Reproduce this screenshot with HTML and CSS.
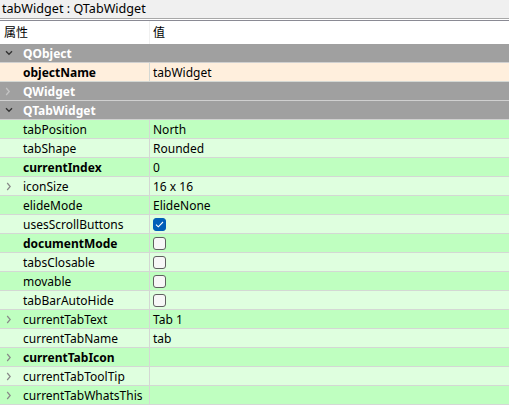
FILE: index.html
```html
<!DOCTYPE html>
<html>
<head>
<meta charset="utf-8">
<link rel="stylesheet" href="styles.css">
</head>
<body>
<div class="panel">
  <div class="title">tabWidget : QTabWidget</div>
  <div class="sep"></div>
  <div class="header">
    <div class="hname">属性</div>
    <div class="hval">值</div>
  </div>
  <div class="rows">
    <div class="group"><span class="arrow"><svg width="8" height="6" viewBox="0 0 8 6"><path d="M1 1.2 L4 4.2 L7 1.2" fill="none" stroke="#333" stroke-width="1.4"/></svg></span>QObject</div>
    <div class="row peach"><div class="name bold">objectName</div><div class="val">tabWidget</div></div>
    <div class="group"><span class="arrow"><svg width="6" height="9" viewBox="0 0 6 9"><path d="M1.2 1 L4.2 4.5 L1.2 8" fill="none" stroke="#c4c4c4" stroke-width="1.3"/></svg></span>QWidget</div>
    <div class="group"><span class="arrow"><svg width="8" height="6" viewBox="0 0 8 6"><path d="M1 1.2 L4 4.2 L7 1.2" fill="none" stroke="#333" stroke-width="1.4"/></svg></span>QTabWidget</div>
    <div class="row g1"><div class="name">tabPosition</div><div class="val">North</div></div>
    <div class="row g2"><div class="name">tabShape</div><div class="val">Rounded</div></div>
    <div class="row g1"><div class="name bold">currentIndex</div><div class="val">0</div></div>
    <div class="row g2"><div class="name"><span class="chev"><svg width="6" height="9" viewBox="0 0 6 9"><path d="M1.2 1 L4.2 4.5 L1.2 8" fill="none" stroke="#888" stroke-width="1.2"/></svg></span>iconSize</div><div class="val">16 x 16</div></div>
    <div class="row g1"><div class="name">elideMode</div><div class="val">ElideNone</div></div>
    <div class="row g2"><div class="name">usesScrollButtons</div><div class="val"><span class="cb checked"><svg width="9" height="7" viewBox="0 0 9 7"><path d="M1 3.6 L3.3 5.8 L8 1" fill="none" stroke="#fff" stroke-width="1.1"/></svg></span></div></div>
    <div class="row g1"><div class="name bold">documentMode</div><div class="val"><span class="cb"></span></div></div>
    <div class="row g2"><div class="name">tabsClosable</div><div class="val"><span class="cb"></span></div></div>
    <div class="row g1"><div class="name">movable</div><div class="val"><span class="cb"></span></div></div>
    <div class="row g2"><div class="name">tabBarAutoHide</div><div class="val"><span class="cb"></span></div></div>
    <div class="row g1"><div class="name"><span class="chev"><svg width="6" height="9" viewBox="0 0 6 9"><path d="M1.2 1 L4.2 4.5 L1.2 8" fill="none" stroke="#888" stroke-width="1.2"/></svg></span>currentTabText</div><div class="val">Tab 1</div></div>
    <div class="row g2"><div class="name">currentTabName</div><div class="val">tab</div></div>
    <div class="row g1"><div class="name bold"><span class="chev"><svg width="6" height="9" viewBox="0 0 6 9"><path d="M1.2 1 L4.2 4.5 L1.2 8" fill="none" stroke="#888" stroke-width="1.2"/></svg></span>currentTabIcon</div><div class="val"></div></div>
    <div class="row g2"><div class="name"><span class="chev"><svg width="6" height="9" viewBox="0 0 6 9"><path d="M1.2 1 L4.2 4.5 L1.2 8" fill="none" stroke="#888" stroke-width="1.2"/></svg></span>currentTabToolTip</div><div class="val"></div></div>
    <div class="row g1"><div class="name"><span class="chev"><svg width="6" height="9" viewBox="0 0 6 9"><path d="M1.2 1 L4.2 4.5 L1.2 8" fill="none" stroke="#888" stroke-width="1.2"/></svg></span>currentTabWhatsThis</div><div class="val"></div></div>
  </div>
</div>
</body>
</html>
```
FILE: styles.css
```css
html, body {
  margin: 0;
  padding: 0;
  background: #ffffff;
}
body {
  font-family: "Noto Sans", "Noto Sans CJK SC", sans-serif;
  font-size: 12px;
  color: #000;
  width: 509px;
  height: 407px;
  overflow: hidden;
}
.panel {
  display: flex;
  flex-direction: column;
}
.title {
  height: 18px;
  line-height: 17px;
  padding-left: 2px;
  font-size: 12.6px;
  background: #f0f0f0;
  border-bottom: 1px solid #a8a8a8;
}
.sep {
  height: 1px;
  background: #fff;
  border-bottom: 1px solid #8a8a94;
}
.header {
  display: flex;
  height: 23px;
  background: #fff;
}
.hname {
  width: 145px;
  padding-left: 4px;
  line-height: 22px;
  border-right: 1px solid #f0f0f0;
  font-family: "Noto Sans CJK SC", sans-serif;
}
.hval {
  padding-left: 3px;
  line-height: 22px;
  font-family: "Noto Sans CJK SC", sans-serif;
}
.rows {
  display: flex;
  flex-direction: column;
}
.group {
  height: 18px;
  line-height: 19px;
  background: #a0a0a0;
  border-bottom: 1px solid #d0d0d0;
  color: #fff;
  font-weight: bold;
  padding-left: 23px;
  position: relative;
  overflow: hidden;
}
.arrow {
  position: absolute;
  left: 5px;
  top: 0;
  height: 18px;
  width: 9px;
  display: flex;
  align-items: center;
}
.row {
  display: flex;
  height: 18px;
  line-height: 19px;
  border-bottom: 1px solid #d4d8d4;
  overflow: hidden;
}
.name {
  width: 126px;
  padding-left: 23px;
  border-right: 1px solid #d4d8d4;
  position: relative;
  white-space: nowrap;
}
.chev {
  position: absolute;
  left: 6px;
  top: 0;
  height: 18px;
  display: flex;
  align-items: center;
}
.val {
  padding-left: 3px;
  display: flex;
  align-items: center;
  flex: 1;
}
.bold {
  font-weight: bold;
}
.peach {
  background: #ffefdd;
}
.g1 {
  background: #bfffc0;
}
.g2 {
  background: #dfffdf;
}
.cb {
  box-sizing: border-box;
  width: 13px;
  height: 13px;
  border: 1px solid #5f5f5f;
  border-radius: 3px;
  background: #f7f7f7;
  display: flex;
  align-items: center;
  justify-content: center;
}
.cb.checked {
  background: #005fb8;
  border-color: #005fb8;
}
```
